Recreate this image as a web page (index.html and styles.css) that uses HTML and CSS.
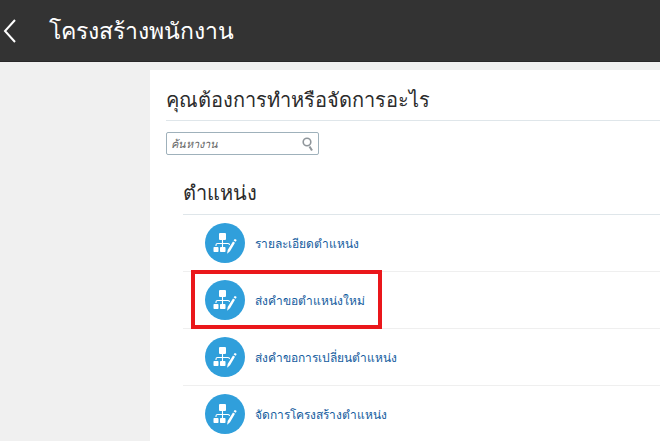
FILE: index.html
```html
<!DOCTYPE html>
<html lang="th">
<head>
<meta charset="utf-8">
<meta name="viewport" content="width=device-width, initial-scale=1">
<title>โครงสร้างพนักงาน</title>
<link rel="stylesheet" href="styles.css">
</head>
<body>
<svg class="defs" aria-hidden="true">
  <symbol id="position-icon" viewBox="0 0 40 40">
    <circle cx="20" cy="20" r="20" fill="#309fdb"/>
    <g fill="#fff">
      <rect x="14" y="10" width="7" height="7" rx="1"/>
      <rect x="8.500" y="24" width="5" height="5" rx=".7"/>
      <rect x="15" y="24" width="5.500" height="5" rx=".7"/>
      <path d="M28 18.500l2 1.200-5 8.600-2.900 2.500.6-3.700zM28.600 17.500l.7-1.100q.4-.6 1.100-.2l.7.400q.7.400.3 1.100l-.7 1.100z"/>
    </g>
    <path d="M17.500 17v7M11 23v-1q0-1.500 1.500-1.500H23q1.500 0 1.500 1.500" fill="none" stroke="#fff" stroke-width="1.100"/>
  </symbol>
</svg>
<header class="topbar">
  <button class="back" type="button" aria-label="กลับ">
    <svg width="14" height="24" viewBox="0 0 14 24" aria-hidden="true"><path d="M12 1L2 12 12 23" fill="none" stroke="#fff" stroke-width="2"/></svg>
  </button>
  <h1 class="page-title">โครงสร้างพนักงาน</h1>
</header>
<main class="panel">
  <h2 class="question">คุณต้องการทำหรือจัดการอะไร</h2>
  <form class="search" role="search">
    <input class="search-input" type="text" placeholder="ค้นหางาน" aria-label="ค้นหางาน">
    <button class="search-button" type="button" aria-label="ค้นหา">
      <svg width="12" height="16" viewBox="0 0 12 16" aria-hidden="true"><circle cx="5" cy="6" r="3.800" fill="none" stroke="#8f969b" stroke-width="1.600"/><path d="M7.500 10.500l2.500 4" stroke="#8f969b" stroke-width="2"/></svg>
    </button>
  </form>
  <section class="group">
    <h3 class="group-title">ตำแหน่ง</h3>
    <ul class="tasks">
      <li class="task"><a class="task-link" href="#details"><svg class="task-icon" aria-hidden="true"><use href="#position-icon"/></svg>รายละเอียดตำแหน่ง</a></li>
      <li class="task highlighted"><a class="task-link" href="#new"><svg class="task-icon" aria-hidden="true"><use href="#position-icon"/></svg>ส่งคำขอตำแหน่งใหม่</a></li>
      <li class="task"><a class="task-link" href="#change"><svg class="task-icon" aria-hidden="true"><use href="#position-icon"/></svg>ส่งคำขอการเปลี่ยนตำแหน่ง</a></li>
      <li class="task"><a class="task-link" href="#structure"><svg class="task-icon" aria-hidden="true"><use href="#position-icon"/></svg>จัดการโครงสร้างตำแหน่ง</a></li>
    </ul>
  </section>
</main>
</body>
</html>
```
FILE: styles.css
```css
*,
*::before {
  box-sizing: border-box;
}

body {
  margin: 0;
  background: #f0f0f0;
  color: #2b2b2b;
  font-family: "Liberation Sans", sans-serif;
}

h1,
h2,
h3 {
  margin: 0;
  font-weight: 400;
}

.defs {
  position: absolute;
  width: 0;
  height: 0;
}

.topbar {
  display: flex;
  align-items: center;
  gap: 32px;
  height: 62px;
  padding-left: 3px;
  background: #333;
  border-bottom: 1px solid #292728;
}

.back,
.search-button {
  display: flex;
  padding: 0;
  border: 0;
  background: none;
}

.page-title {
  color: #fff;
  font-size: 23px;
  line-height: 32px;
}

.panel {
  min-height: calc(100vh - 70px);
  margin: 8px 0 0 150px;
  padding: 14px 0 0 16px;
  background: #fff;
  overflow: hidden;
}

.question {
  height: 37px;
  border-bottom: 1px solid #dfe6ea;
  font-size: 20px;
  line-height: 32px;
}

.search {
  display: flex;
  align-items: center;
  width: 153px;
  height: 23px;
  margin-top: 11px;
  padding: 0 4px;
  border: 1px solid #9fb1bb;
  border-radius: 2px;
}

.search-input {
  flex: 1;
  min-width: 0;
  padding: 0;
  border: 0;
  outline: 0;
  background: none;
  font: italic 11px/20px "Liberation Sans", sans-serif;
}

.search-input::placeholder {
  color: #666;
  opacity: 1;
}

.group {
  margin: 22px 0 0 17px;
}

.group-title {
  height: 38px;
  border-bottom: 1px solid #dfe6ea;
  font-size: 20px;
  line-height: 32px;
}

.tasks {
  margin: 0;
  padding: 0;
  list-style: none;
}

.task {
  position: relative;
  height: 57px;
  padding-left: 22px;
  border-bottom: 1px solid #efefef;
}

.task:last-child {
  border-bottom: 0;
}

.task-link {
  display: inline-flex;
  align-items: center;
  gap: 10px;
  height: 56px;
  color: #145c9e;
  font-size: 12px;
  text-decoration: none;
}

.task-icon {
  width: 40px;
  height: 40px;
}

.highlighted::before {
  content: "";
  position: absolute;
  top: -2px;
  left: 8px;
  width: 191px;
  height: 59px;
  border: 4px solid #ea171b;
  pointer-events: none;
}
```
